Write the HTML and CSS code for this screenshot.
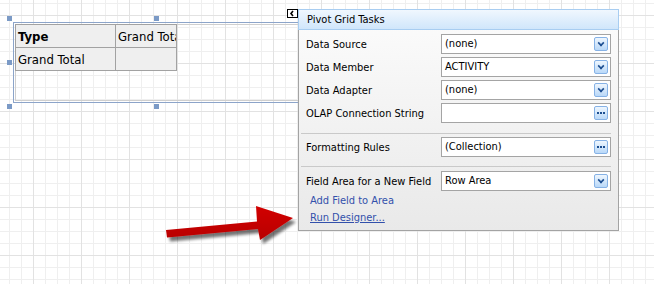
FILE: index.html
```html
<!DOCTYPE html>
<html lang="en">
<head>
    <meta charset="UTF-8">
    <title>Pivot Grid Tasks</title>
    <link rel="stylesheet" href="styles.css">
</head>
<body>

    <div class="desk">

        <!-- Pivot grid control on the report surface -->
        <div class="handle h1"></div>
        <div class="handle h2"></div>
        <div class="handle h3"></div>
        <div class="handle h4"></div>
        <div class="handle h5"></div>

        <div class="pivot">
            <div class="pivot-inner">
                <table class="grid">
                    <tr>
                        <td class="c1 bold">Type</td>
                        <td class="c2"><div class="clip">Grand Total</div></td>
                    </tr>
                    <tr>
                        <td class="c1">Grand Total</td>
                        <td class="c2"></td>
                    </tr>
                </table>
            </div>
        </div>

        <!-- Smart tag button -->
        <div class="collapse">
            <svg width="9" height="7" viewBox="0 0 9 7"><path d="M5 1 L3 3.5 L5 6" stroke="#000" stroke-width="1.6" fill="none"/></svg>
        </div>

        <!-- Tasks panel -->
        <div class="tasks">
            <div class="tasks-head">Pivot Grid Tasks</div>
            <div class="tasks-body">
                <div class="row">
                    <span class="label">Data Source</span>
                    <div class="combo"><span>(none)</span><i class="btn drop"></i></div>
                </div>
                <div class="row">
                    <span class="label">Data Member</span>
                    <div class="combo"><span>ACTIVITY</span><i class="btn drop"></i></div>
                </div>
                <div class="row">
                    <span class="label">Data Adapter</span>
                    <div class="combo"><span>(none)</span><i class="btn drop"></i></div>
                </div>
                <div class="row">
                    <span class="label">OLAP Connection String</span>
                    <div class="combo"><span></span><i class="btn dots"></i></div>
                </div>

                <div class="sep sep1"></div>

                <div class="row">
                    <span class="label">Formatting Rules</span>
                    <div class="combo"><span>(Collection)</span><i class="btn dots"></i></div>
                </div>

                <div class="sep sep2"></div>

                <div class="row">
                    <span class="label">Field Area for a New Field</span>
                    <div class="combo"><span>Row Area</span><i class="btn drop"></i></div>
                </div>

                <a class="link" href="#">Add Field to Area</a>
                <a class="link under" href="#">Run Designer...</a>
            </div>
        </div>

        <!-- Red arrow pointing at Run Designer -->
        <svg class="arrow" width="150" height="50" viewBox="150 200 150 50">
            <defs>
                <filter id="shadow" x="-20%" y="-40%" width="140%" height="200%">
                    <feGaussianBlur in="SourceAlpha" stdDeviation="1.6"/>
                    <feOffset dx="3" dy="4" result="blur"/>
                    <feComponentTransfer><feFuncA type="linear" slope="0.55"/></feComponentTransfer>
                    <feMerge><feMergeNode/><feMergeNode in="SourceGraphic"/></feMerge>
                </filter>
                <linearGradient id="red" x1="0" y1="0" x2="0" y2="1">
                    <stop offset="0" stop-color="#d20000"/>
                    <stop offset="1" stop-color="#b80000"/>
                </linearGradient>
            </defs>
            <polygon filter="url(#shadow)" fill="url(#red)"
                     points="166,230 257,221.5 256,206 293,218 260,240 258,229 167,237.5"/>
        </svg>

    </div>

</body>
</html>
```

FILE: styles.css
```css
body {
    margin: 0;
    padding: 0;
    background-color: #fff;
    background-image:
        linear-gradient(to right, #e2e2e2 1px, transparent 1px),
        linear-gradient(to bottom, #e2e2e2 1px, transparent 1px),
        linear-gradient(to right, #efefef 1px, transparent 1px),
        linear-gradient(to bottom, #efefef 1px, transparent 1px);
    background-size: 48px 48px, 48px 48px, 12px 12px, 12px 12px;
    background-position: 33px 0, 0 15px, 9px 0, 0 3px;
    font-family: "DejaVu Sans Condensed", "DejaVu Sans", sans-serif;
    font-size: 11px;
    color: #000;
}
.desk {
    position: relative;
    width: 654px;
    height: 284px;
    overflow: hidden;
}

/* pivot grid control */
.handle {
    position: absolute;
    width: 5px;
    height: 5px;
    background-color: #7b9ac6;
}
.h1 { left: 7px; top: 16px; }
.h2 { left: 154px; top: 16px; }
.h3 { left: 7px; top: 60px; }
.h4 { left: 7px; top: 104px; }
.h5 { left: 154px; top: 104px; }

.pivot {
    position: absolute;
    left: 13px;
    top: 22px;
    width: 300px;
    height: 81px;
    border: 1px solid #8ca4c9;
    padding: 1px;
    box-sizing: border-box;
}
.pivot-inner {
    height: 100%;
    border: 1px solid #cfcfcf;
    box-sizing: border-box;
}
.grid {
    margin: -1px 0 0 -1px;
    border-collapse: collapse;
    font-size: 13px;
    table-layout: fixed;
    width: 162px;
}
.grid td {
    height: 23px;
    padding: 0 0 0 2px;
    border: 1px solid #a2a2a2;
    background-color: #efefef;
    white-space: nowrap;
    overflow: hidden;
    box-sizing: border-box;
}
.grid .c1 { width: 100px; }
.grid .c2 { width: 61px; }
.grid .clip {
    width: 58px;
    overflow: hidden;
}
.grid .bold { font-weight: bold; }

/* smart tag */
.collapse {
    position: absolute;
    left: 287px;
    top: 9px;
    width: 9px;
    height: 7px;
    border: 1px solid #000;
    background-color: #fff;
    line-height: 0;
}

/* tasks panel */
.tasks {
    position: absolute;
    left: 298px;
    top: 9px;
    width: 321px;
    height: 222px;
    box-sizing: border-box;
    border: 1px solid #a3a3a3;
    background: linear-gradient(to bottom, #fcfcfc, #e9e9e9);
}
.tasks-head {
    height: 21px;
    box-sizing: border-box;
    border: 1px solid #a8cdf1;
    margin: -1px -1px 0 -1px;
    padding-left: 8px;
    line-height: 19px;
    background: linear-gradient(to bottom, #f0f7fe, #d0e6fb);
}
.tasks-body {
    display: flex;
    flex-direction: column;
    gap: 3px;
    padding: 4px 7px 0 7px;
}
.row {
    display: flex;
    align-items: center;
    height: 20px;
}
.label {
    width: 135px;
}
.combo {
    position: relative;
    width: 170px;
    height: 20px;
    box-sizing: border-box;
    border: 1px solid #a4a4a4;
    background-color: #fff;
    padding-left: 3px;
    line-height: 18px;
}
.btn {
    position: absolute;
    right: 2px;
    top: 2px;
    width: 14px;
    height: 14px;
    box-sizing: border-box;
    border: 1px solid #86b2e6;
    border-radius: 2px;
    background: linear-gradient(to bottom, #eef6fe, #b9d8f8);
}
.drop::after {
    content: "";
    position: absolute;
    left: 3px;
    top: 3px;
    width: 4px;
    height: 4px;
    border-right: 2px solid #1c4e91;
    border-bottom: 2px solid #1c4e91;
    transform: translate(0, -1px) rotate(45deg) scale(0.8);
}
.dots::after {
    content: "";
    position: absolute;
    left: 2px;
    top: 5px;
    width: 2px;
    height: 2px;
    background-color: #1c4e91;
    box-shadow: 3px 0 0 #1c4e91, 6px 0 0 #1c4e91;
}
.sep {
    height: 1px;
    background-color: #c9c9c9;
    margin: 0 0 0 -5px;
}
.sep1 { margin-top: 7px; }
.sep2 { margin-top: 6px; margin-bottom: 1px; }
.link {
    color: #3250ab;
    text-decoration: none;
    padding-left: 4px;
    height: 14px;
    line-height: 14px;
}
.link.under {
    text-decoration: underline;
}

.arrow {
    position: absolute;
    left: 150px;
    top: 200px;
}
```
